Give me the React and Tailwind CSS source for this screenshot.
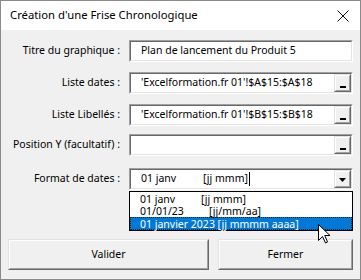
import React from 'react'

const font = { fontFamily: '"Noto Sans", "Open Sans", sans-serif' }

// sunken 3D frame used by the text boxes
function Sunken({ children, className = '' }) {
  return (
    <div className={`h-[22px] border border-t-[#a0a0a0] border-l-[#a0a0a0] border-b-white border-r-white ${className}`}>
      <div className="h-full border border-t-[#696969] border-l-[#696969] border-b-[#e3e3e3] border-r-[#e3e3e3] bg-white flex items-center">
        {children}
      </div>
    </div>
  )
}

function Raised({ children, className = '' }) {
  return (
    <div className={`border border-t-[#e3e3e3] border-l-[#e3e3e3] border-b-[#696969] border-r-[#696969] ${className}`}>
      <div className="h-full border border-t-white border-l-white border-b-[#a0a0a0] border-r-[#a0a0a0] bg-[#f0f0f0] flex items-center justify-center">
        {children}
      </div>
    </div>
  )
}

function RefButton() {
  return (
    <Raised className="w-[17px] h-[18px] shrink-0">
      <div className="w-[6px] h-[2px] bg-black mt-[7px]" />
    </Raised>
  )
}

function Row({ label, className = '', children }) {
  return (
    <div className={`flex items-center h-[22px] ${className}`}>
      <div className="w-[120px] text-right pr-[1px] text-[10.5px] text-black whitespace-nowrap">{label}</div>
      <div className="ml-[8px] w-[224px]">{children}</div>
    </div>
  )
}

function Cursor() {
  return (
    <svg className="absolute left-[188px] top-[32px]" width="13" height="20" viewBox="0 0 13 20">
      <path d="M0.5 0.5 L0.5 16.5 L4.5 12.5 L7.5 19 L9.5 18 L6.8 11.5 L12 11.5 Z" fill="white" stroke="black" strokeWidth="1" />
    </svg>
  )
}

export default function App() {
  return (
    <div className="w-[361px] h-[280px] border border-[#8a8a8a] bg-[#f0f0f0] flex flex-col overflow-hidden" style={font}>
      {/* title bar */}
      <div className="h-[29px] bg-white flex items-center justify-between pl-[9px] pr-[11px]">
        <span className="text-[11.3px] text-black">Création d'une Frise Chronologique</span>
        <svg width="12" height="12" viewBox="0 0 12 12">
          <path d="M0.5 0.5 L11.5 11.5 M11.5 0.5 L0.5 11.5" stroke="#111" strokeWidth="1" />
        </svg>
      </div>

      <div className="flex flex-col pt-[10px]">
        <Row label="Titre du graphique :">
          <Sunken>
            <span className="pl-[10px] text-[10.5px] whitespace-nowrap">Plan de lancement du Produit 5</span>
          </Sunken>
        </Row>

        <Row label="Liste dates :" className="mt-[10px]">
          <Sunken>
            <span className="flex-1 min-w-0 overflow-hidden pl-[10px] text-[10.5px] whitespace-nowrap">'Excelformation.fr 01'!$A$15:$A$18</span>
            <RefButton />
          </Sunken>
        </Row>

        <Row label="Liste Libellés :" className="mt-[10px]">
          <Sunken>
            <span className="flex-1 min-w-0 overflow-hidden pl-[10px] text-[10.5px] whitespace-nowrap">'Excelformation.fr 01'!$B$15:$B$18</span>
            <RefButton />
          </Sunken>
        </Row>

        <Row label="Position Y (facultatif) :" className="mt-[8px]">
          <Sunken>
            <span className="flex-1" />
            <RefButton />
          </Sunken>
        </Row>

        <Row label="Format de dates :" className="mt-[12px]">
          <div className="relative">
            <Sunken>
              <span className="flex-1 min-w-0 pl-[10px] text-[10.5px] whitespace-nowrap flex items-center">
                <span className="inline-block w-[62px]">01 janv</span>
                <span>[jj mmm]</span>
                <span className="w-px h-[14px] bg-black ml-[1px]" />
              </span>
              <Raised className="w-[17px] h-[18px] shrink-0">
                <svg width="7" height="4" viewBox="0 0 7 4" className="mt-[2px]">
                  <path d="M0 0 L7 0 L3.5 4 Z" fill="black" />
                </svg>
              </Raised>
            </Sunken>

            {/* open dropdown list */}
            <div className="absolute left-0 top-[23px] w-[224px] h-[40px] border border-black bg-white text-[10.5px] leading-[12px] z-10">
              <div className="h-[13px] pl-[10px] flex items-center whitespace-nowrap">
                <span className="inline-block w-[61px]">01 janv</span>
                <span>[jj mmm]</span>
              </div>
              <div className="h-[12px] pl-[10px] flex items-center whitespace-nowrap">
                <span className="inline-block w-[69px]">01/01/23</span>
                <span>[jj/mm/aa]</span>
              </div>
              <div className="h-[13px] bg-[#0078d7] text-white border border-dotted border-[#222] pl-[9px] flex items-center whitespace-nowrap">
                01 janvier 2023 [jj mmmm aaaa]
              </div>
              <Cursor />
            </div>
          </div>
        </Row>

        <div className="flex mt-[49px] pl-[7px] gap-[9px]">
          <Raised className="w-[201px] h-[31px]">
            <span className="text-[10.5px]">Valider</span>
          </Raised>
          <Raised className="w-[135px] h-[31px]">
            <span className="text-[10.5px]">Fermer</span>
          </Raised>
        </div>
      </div>
    </div>
  )
}
